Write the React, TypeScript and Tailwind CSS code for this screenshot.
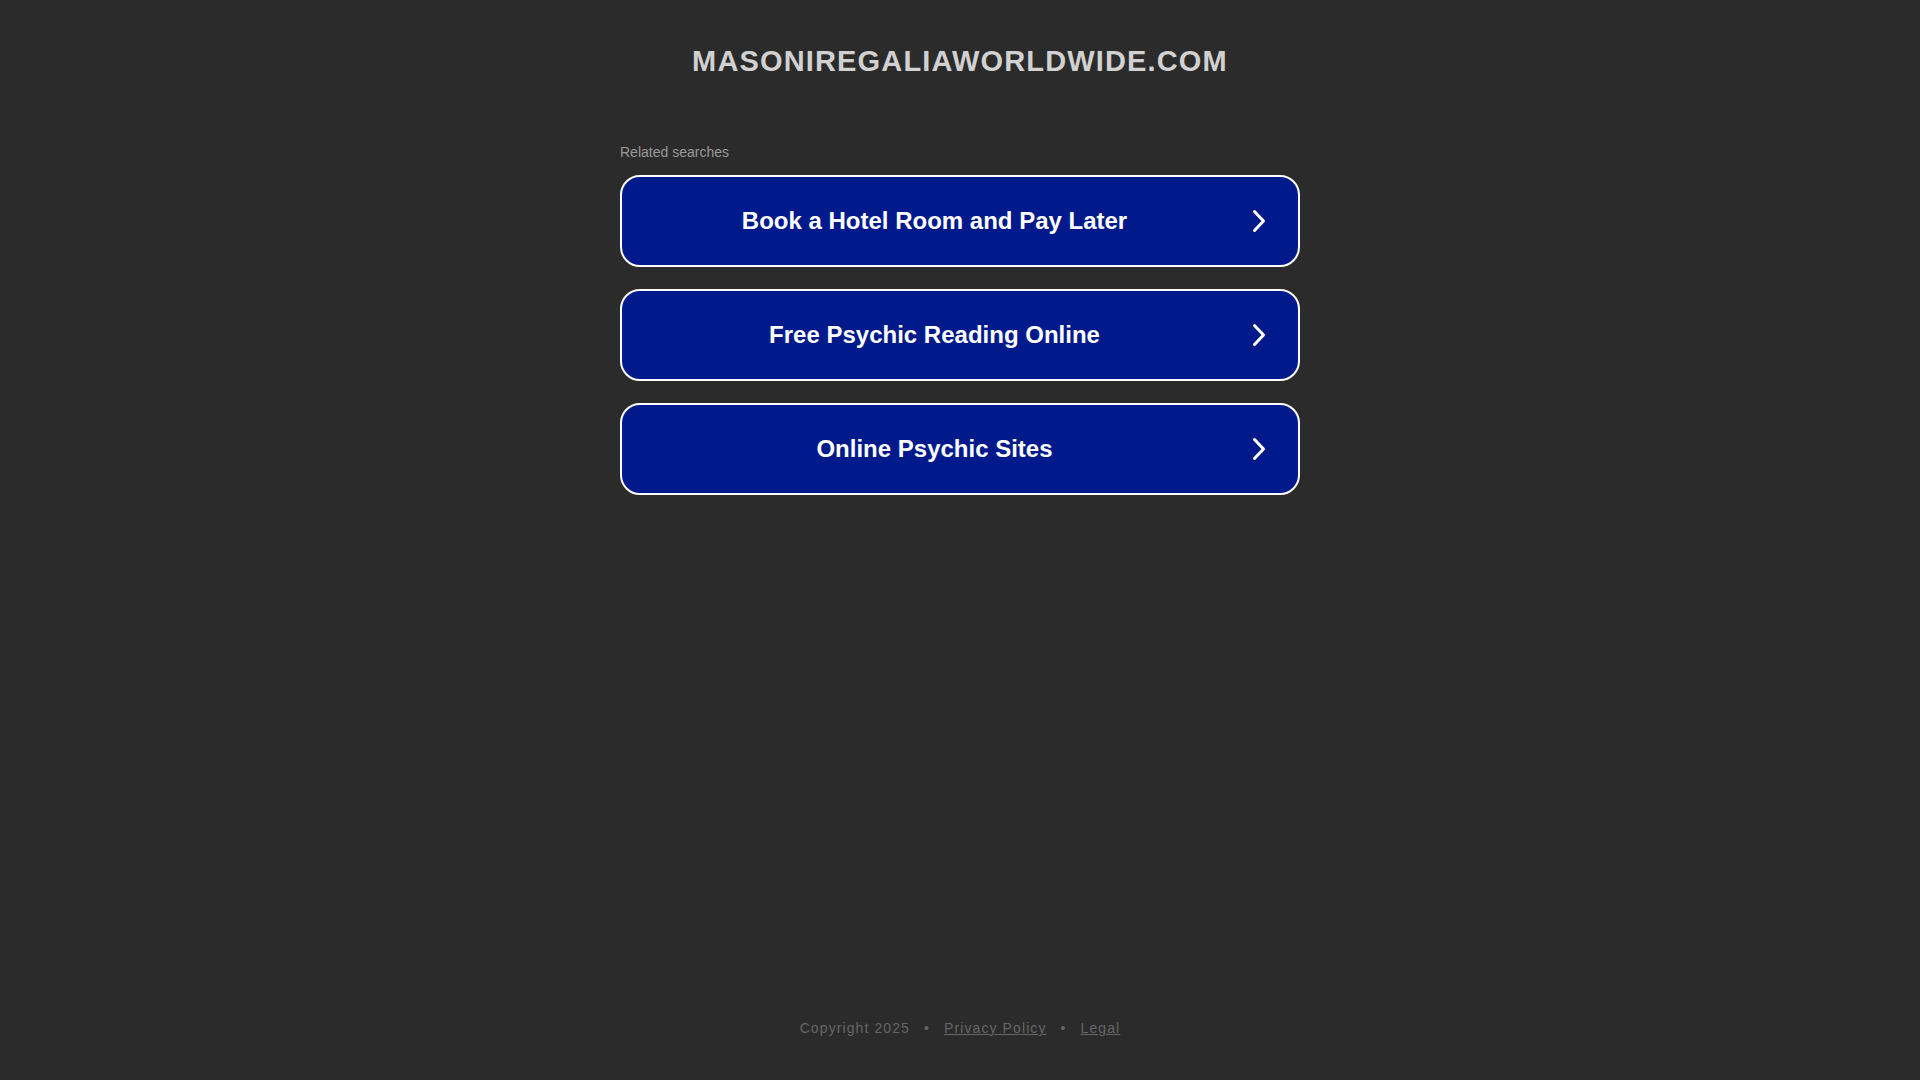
const SEARCHES = ['Book a Hotel Room and Pay Later', 'Free Psychic Reading Online', 'Online Psychic Sites']

function Chevron() {
  return (
    <svg width="14" height="24" viewBox="0 0 14 24" fill="none" className="ml-[5px] shrink-0">
      <path d="M2.5 2.5 L11.5 12 L2.5 21.5" stroke="white" strokeWidth="3" strokeLinecap="round" strokeLinejoin="round" />
    </svg>
  )
}

export default function App() {
  return (
    <div className="flex min-h-screen flex-col items-center bg-[#2b2b2b] font-['Liberation_Sans',Arial,sans-serif]">
      <h1 className="pt-[45px] text-[29px] font-bold leading-[32px] tracking-[1.15px] text-[#d1d1d1]">
        MASONIREGALIAWORLDWIDE.COM
      </h1>

      <div className="mt-[67px] w-[680px]">
        <p className="mb-[15px] text-[14px] leading-[16px] text-[#999999]">Related searches</p>
        <div className="flex flex-col gap-[22px]">
          {SEARCHES.map(s => (
            <a
              key={s}
              href="#"
              className="flex h-[92px] items-center rounded-[20px] border-2 border-white bg-[#011a8b] pr-[32px]"
            >
              <span className="flex-1 text-center text-[24px] font-bold text-white">{s}</span>
              <Chevron />
            </a>
          ))}
        </div>
      </div>

      <footer className="mt-auto pb-[43px] text-[14px] leading-[18px] tracking-[1.1px] text-[#666666]">
        Copyright 2025
        <span className="mx-[14px]">•</span>
        <a href="#" className="underline">Privacy Policy</a>
        <span className="mx-[14px]">•</span>
        <a href="#" className="underline">Legal</a>
      </footer>
    </div>
  )
}
